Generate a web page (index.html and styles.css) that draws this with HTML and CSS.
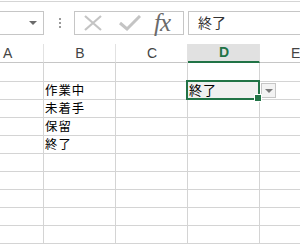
FILE: index.html
```html
<!DOCTYPE html>
<html lang="ja">
<head>
  <meta charset="UTF-8" />
  <title>Sheet1</title>
  <link rel="stylesheet" href="styles.css">
</head>
<body>
  <div class="ribbon-edge"></div>

  <div class="formula-bar">
    <div class="name-box">
      <span class="arrow"></span>
    </div>
    <div class="grip"><i></i><i></i><i></i></div>
    <div class="func-box">
      <svg class="icon cancel" width="20" height="16" viewBox="0 0 20 16">
        <path d="M2 1 L18 15 M18 1 L2 15" stroke="#c4c4c4" stroke-width="2.2" fill="none"/>
      </svg>
      <svg class="icon enter" width="22" height="16" viewBox="0 0 22 16">
        <path d="M1 8 L8 14 L21 1" stroke="#c4c4c4" stroke-width="3" fill="none"/>
      </svg>
      <span class="fx">fx</span>
    </div>
    <div class="formula-input">終了</div>
  </div>

  <div class="sheet">
    <div class="row head">
      <div class="cell">A</div>
      <div class="cell">B</div>
      <div class="cell">C</div>
      <div class="cell active-col">D</div>
      <div class="cell">E</div>
    </div>
    <div class="row first">
      <div class="cell"></div><div class="cell"></div><div class="cell"></div><div class="cell"></div><div class="cell"></div>
    </div>
    <div class="row">
      <div class="cell"></div><div class="cell">作業中</div><div class="cell"></div>
      <div class="cell selected">終了<span class="list-btn"></span></div>
      <div class="cell"></div>
    </div>
    <div class="row">
      <div class="cell"></div><div class="cell">未着手</div><div class="cell"></div><div class="cell"></div><div class="cell"></div>
    </div>
    <div class="row">
      <div class="cell"></div><div class="cell">保留</div><div class="cell"></div><div class="cell"></div><div class="cell"></div>
    </div>
    <div class="row">
      <div class="cell"></div><div class="cell">終了</div><div class="cell"></div><div class="cell"></div><div class="cell"></div>
    </div>
    <div class="row">
      <div class="cell"></div><div class="cell"></div><div class="cell"></div><div class="cell"></div><div class="cell"></div>
    </div>
    <div class="row">
      <div class="cell"></div><div class="cell"></div><div class="cell"></div><div class="cell"></div><div class="cell"></div>
    </div>
    <div class="row">
      <div class="cell"></div><div class="cell"></div><div class="cell"></div><div class="cell"></div><div class="cell"></div>
    </div>
    <div class="row">
      <div class="cell"></div><div class="cell"></div><div class="cell"></div><div class="cell"></div><div class="cell"></div>
    </div>
    <div class="row">
      <div class="cell"></div><div class="cell"></div><div class="cell"></div><div class="cell"></div><div class="cell"></div>
    </div>
  </div>
</body>
</html>
```

FILE: styles.css
```css
* {
  box-sizing: border-box;
  margin: 0;
  padding: 0;
}

body {
  width: 300px;
  height: 250px;
  overflow: hidden;
  background: #fff;
  font-family: "Liberation Sans", "Noto Sans CJK JP", sans-serif;
  color: #222;
}

.ribbon-edge {
  height: 2px;
  border-top: 1px solid #fff;
  border-bottom: 1px solid #d5d5d5;
}

/* formula bar */
.formula-bar {
  display: flex;
  height: 24px;
  margin: 9px 0 9px;
}

.name-box {
  position: relative;
  width: 44px;
  border: 1px solid #c6c6c6;
  border-left: none;
}

.name-box .arrow {
  position: absolute;
  left: 29px;
  top: 9px;
  border-left: 4px solid transparent;
  border-right: 4px solid transparent;
  border-top: 4px solid #6b6b6b;
}

.grip {
  width: 30px;
  display: flex;
  flex-direction: column;
  align-items: center;
  justify-content: center;
  gap: 2px;
  padding-left: 1px;
}

.grip i {
  width: 2px;
  height: 2px;
  background: #9a9a9a;
}

.func-box {
  width: 110px;
  border: 1px solid #c6c6c6;
  display: flex;
  align-items: center;
  padding-left: 8px;
}

.icon.enter {
  margin-left: 16px;
}

.fx {
  margin-left: 13px;
  font-family: "Liberation Serif", serif;
  font-style: italic;
  font-size: 25px;
  line-height: 22px;
  color: #6a6a6a;
  letter-spacing: -1px;
}

.formula-input {
  flex: 1;
  margin-left: 4px;
  border: 1px solid #c6c6c6;
  border-right: none;
  padding-left: 9px;
  font-family: "Noto Sans CJK JP", sans-serif;
  font-size: 14px;
  line-height: 21px;
  color: #333;
}

/* grid: column A and E are cut by the window edges */
.row {
  display: flex;
  height: 18px;
}

.cell {
  flex: 0 0 72px;
  border-right: 1px solid #d4d4d4;
  border-bottom: 1px solid #d4d4d4;
  padding-left: 1px;
  font-family: "Noto Sans CJK JP", sans-serif;
  font-size: 12.4px;
  letter-spacing: 1px;
  line-height: 16px;
  color: #000;
}

.cell:first-child {
  flex-basis: 44px;
}

.cell:last-child {
  flex-basis: 40px;
  border-right: none;
}

.row.head {
  height: 19px;
}

.row.head .cell {
  text-align: center;
  font-family: "Liberation Sans", sans-serif;
  font-size: 14px;
  letter-spacing: 0;
  line-height: 18px;
  color: #444;
  border-right-color: #e2e2e2;
  border-bottom-color: #c6c6c6;
}

.row.head .cell:first-child {
  text-align: left;
  padding-left: 3px;
}

.row.head .cell:last-child {
  text-align: left;
  padding-left: 31px;
}

.row.head .active-col {
  background: #e1e1e1;
  color: #217346;
  font-weight: bold;
  border-bottom: 2px solid #217346;
  line-height: 17px;
}

.row.first {
  height: 19px;
}

.cell.selected {
  position: relative;
  background: #f0f0f0;
  font-size: 13px;
}

.cell.selected::after {
  content: "";
  position: absolute;
  top: -2px;
  left: -2px;
  right: -1px;
  bottom: -1px;
  border: 2px solid #217346;
}

.cell.selected::before {
  content: "";
  position: absolute;
  right: -3px;
  bottom: -3px;
  width: 6px;
  height: 6px;
  background: #217346;
  border: 1px solid #fff;
  z-index: 1;
}

.list-btn {
  position: absolute;
  left: 73px;
  top: 1px;
  width: 15px;
  height: 15px;
  background: #f3f3f3;
  border: 1px solid #c6c6c6;
}

.list-btn::after {
  content: "";
  position: absolute;
  left: 3px;
  top: 5px;
  border-left: 4px solid transparent;
  border-right: 4px solid transparent;
  border-top: 4px solid #7a7a7a;
}
```
